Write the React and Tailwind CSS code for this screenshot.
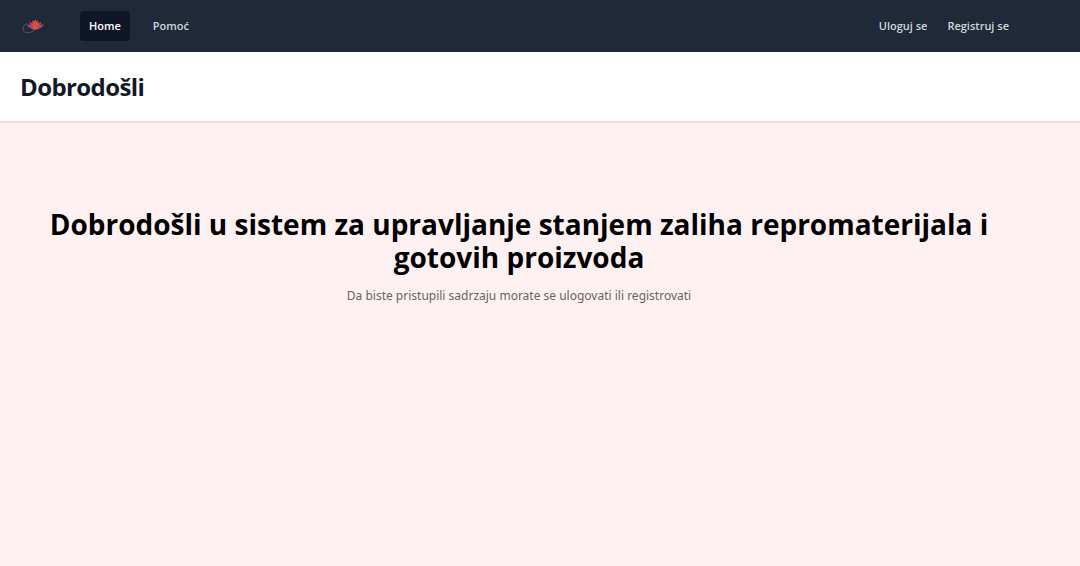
function LotusLogo() {
  return (
    <svg viewBox="0 0 66 51" className="h-[17px] w-[22px]" role="img" aria-label="Lotus">
      <path
        d="M15 17C5 20 1 29 4 37c4 9 17 9 26 4 5-3 7-7 12-9"
        fill="none"
        stroke="#74509c"
        strokeWidth="2.5"
        strokeLinecap="round"
      />
      <path d="M40 32C29 34 18 28 14 20c10-1 21 3 26 12Z" fill="#9c4a86" />
      <path d="M40 32c11 2 21-4 25-12-10-1-20 3-25 12Z" fill="#9c4a86" />
      <path d="M40 31c-11-2-17-10-18-20 9 3 16 10 18 20Z" fill="#c93f58" />
      <path d="M40 31c11-2 17-10 18-20-9 3-16 10-18 20Z" fill="#c93f58" />
      <path d="M40 31c-8-5-11-15-8-25 6 5 9 14 8 25Z" fill="#e0492f" />
      <path d="M40 31c8-5 11-15 8-25-6 5-9 14-8 25Z" fill="#e0492f" />
      <path d="M40 29c-5-6-5-16 0-23 5 7 5 17 0 23Z" fill="#c23c42" stroke="#f08b35" strokeWidth="1.5" />
      <path d="M27 31c8 5 18 5 26 0-8-3-18-3-26 0Z" fill="#dd5548" />
    </svg>
  );
}

function NavLink({ children, active = false }) {
  return (
    <a
      href="#"
      aria-current={active ? "page" : undefined}
      className={
        active
          ? "rounded-[4px] bg-[#0f1626] px-[9px] py-[6px] text-white"
          : "rounded-[4px] px-[9px] py-[6px] text-[#d1d5db]"
      }
    >
      {children}
    </a>
  );
}

export default function App() {
  return (
    <div className="min-h-screen bg-[#fff1f1] font-['Open_Sans','Noto_Sans',sans-serif]">
      <nav className="flex h-[52px] items-center bg-[#1f2937] pr-[62px] pl-[22px] text-[11px] leading-[18px] font-semibold">
        <a href="#">
          <LotusLogo />
        </a>
        <div className="ml-9 flex gap-[14px]">
          <NavLink active>Home</NavLink>
          <NavLink>Pomoć</NavLink>
        </div>
        <div className="ml-auto flex gap-[2px]">
          <NavLink>Uloguj se</NavLink>
          <NavLink>Registruj se</NavLink>
        </div>
      </nav>
      <header className="bg-white px-5 pt-[19px] pb-[18px] shadow-[0_1px_2px_rgba(160,30,30,0.2)]">
        <h1 className="text-[24px] leading-[32px] font-bold tracking-tight text-[#111827]">Dobrodošli</h1>
      </header>
      <main className="pt-[87px] pr-[88px] pl-[46px] text-center">
        <h2 className="text-[28px] leading-[33px] font-bold text-black">
          Dobrodošli u sistem za upravljanje stanjem zaliha repromaterijala i gotovih proizvoda
        </h2>
        <p className="mt-[12px] font-['Noto_Sans',sans-serif] text-[12px] leading-[20px] text-[#6b6164]">
          Da biste pristupili sadrzaju morate se ulogovati ili registrovati
        </p>
      </main>
    </div>
  );
}
